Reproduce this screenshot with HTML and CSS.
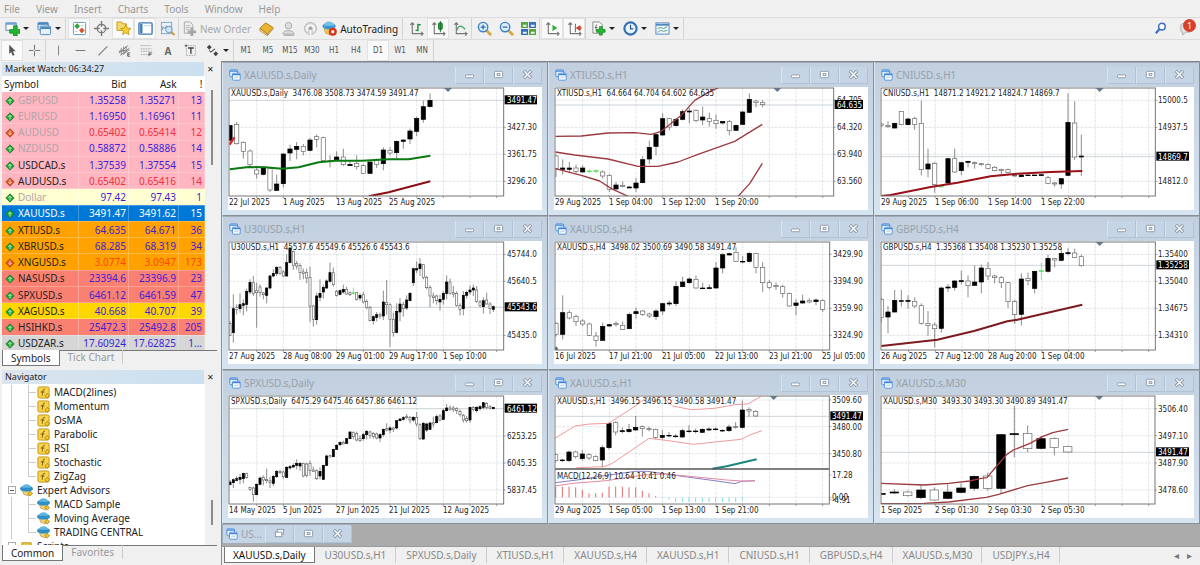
FILE: index.html
```html
<!DOCTYPE html>
<html lang="en">

<head>
    <meta charset="utf-8">
    <title>Trading terminal</title>
    <link rel="stylesheet" href="styles.css">
</head>

<body>
    <!-- icon set -->
    <svg class="defs" width="0" height="0">
        <symbol id="i-newchart" viewBox="0 0 16 16"><path d="M1 2h11v8H1z" fill="#fff" stroke="#4d86bd"/><path d="M1 3h11" stroke="#6ba0d0" stroke-width="2"/><path d="M9 5h4v4h3v4h-3v3H9v-3H5V9h4z" fill="#22b431" stroke="#0f7d1c" stroke-width=".7"/></symbol>
        <symbol id="i-profiles" viewBox="0 0 16 16"><rect x="1" y="1.500" width="11" height="8" rx="1" fill="#cfe2f5" stroke="#4d86bd"/><rect x="3.500" y="5.500" width="11" height="9" rx="1" fill="#e6f1fb" stroke="#4d86bd"/><path d="M1 3h11M4 7.500h10" stroke="#4d86bd" stroke-width="2"/></symbol>
        <symbol id="i-market" viewBox="0 0 16 16"><rect x="1.500" y="1.500" width="13" height="13" rx="1" fill="#fff" stroke="#5a94c8"/><path d="M5.500 2.500l3 3-3 3-3-3z" fill="#2da53a"/><path d="M10.500 7l3 3-3 3-3-3z" fill="#d4542c"/><path d="M9 5h4M3 11h3" stroke="#c4cdd6"/></symbol>
        <symbol id="i-target" viewBox="0 0 16 16"><circle cx="8" cy="8" r="4.500" fill="none" stroke="#777" stroke-width="1.300"/><path d="M8 0v6M8 10v6M0 8h6M10 8h6" stroke="#777" stroke-width="1.500"/></symbol>
        <symbol id="i-navigator" viewBox="0 0 16 16"><path d="M1 1h5l1 2h4v7H1z" fill="#f5d870" stroke="#c39a1c"/><path d="M10.500 4l1.600 3.600 3.900.4-2.900 2.600.9 3.900-3.500-2-3.500 2 .9-3.900L5 8l3.900-.4z" fill="#fbd22c" stroke="#b98a10" stroke-width=".8"/></symbol>
        <symbol id="i-terminal" viewBox="0 0 16 16"><rect x="1" y="2" width="14" height="12" rx="1" fill="#fff" stroke="#3f79b4" stroke-width="1.500"/><path d="M3.500 3v10" stroke="#3f79b4" stroke-width="2.500"/><path d="M6 5h8" stroke="#bad3ea"/></symbol>
        <symbol id="i-tester" viewBox="0 0 16 16"><rect x="1.500" y="1.500" width="11" height="12" fill="#edf3f9" stroke="#7da3c7"/><path d="M3 10V6l2 2 2-3 2 3 2-3" fill="none" stroke="#6f8fac"/><circle cx="9.500" cy="9" r="3.500" fill="#cfe4f7" stroke="#6394c2"/><path d="M12 11.500l3.500 3.500" stroke="#d09a35" stroke-width="2"/></symbol>
        <symbol id="i-order" viewBox="0 0 16 16"><path d="M2.500 1h6l3 3v9h-9z" fill="#eee" stroke="#aaa"/><path d="M4 5h5M4 7h5M4 9h4" stroke="#bbb"/><path d="M9 7h3v3h3v3h-3v3H9v-3H6v-3h3z" fill="#a5a5a5"/></symbol>
        <symbol id="i-book" viewBox="0 0 16 16"><path d="M1 8l6-6 8 5-6 7z" fill="#eab52e" stroke="#a8760e"/><path d="M1 8v2.500l8 5V14zM9 15.500l6-7V7" fill="#fbe9ae" stroke="#a8760e" stroke-width=".8"/></symbol>
        <symbol id="i-person" viewBox="0 0 16 16"><circle cx="8" cy="5" r="3.500" fill="#ddd" stroke="#aaa"/><path d="M2 14c0-5 12-5 12 0z" fill="#ddd" stroke="#aaa"/><path d="M3 15h11" stroke="#b8b8b8" stroke-width="2"/></symbol>
        <symbol id="i-signal" viewBox="0 0 16 16"><circle cx="8" cy="8" r="6.500" fill="#d4d4d4" stroke="#bbb"/><path d="M8 15V8M5 11a4 4 0 1 1 6 0" fill="none" stroke="#fff" stroke-width="1.500"/><circle cx="8" cy="8" r="1.500" fill="#999"/></symbol>
        <symbol id="i-auto" viewBox="0 0 16 16"><path d="M2 7l2 6 6 2 2-8z" fill="#f3cb53" stroke="#bd8c1f" stroke-width=".7"/><ellipse cx="7.500" cy="5.500" rx="7" ry="3.500" fill="#3d97cf"/><path d="M2 5c1-6 10-6 11 0z" fill="#74c0e8"/><circle cx="11.500" cy="11.500" r="4.300" fill="#d8331c"/><path d="M10 10h3v3h-3z" fill="#fff"/></symbol>
        <symbol id="i-bars" viewBox="0 0 16 16"><path d="M3.500 2v11.500H15M1.500 4l2-2 2 2M13 11.500l2 2-2 2" fill="none" stroke="#777" stroke-width="1.200"/><path d="M9.500 3v8M9.500 4h3M7 10h3" stroke="#21903a" stroke-width="1.500"/></symbol>
        <symbol id="i-candle" viewBox="0 0 16 16"><path d="M3.500 2v11.500H15M1.500 4l2-2 2 2M13 11.500l2 2-2 2" fill="none" stroke="#777" stroke-width="1.200"/><rect x="8" y="2" width="4" height="7" rx="1" fill="#21b13a" stroke="#12722a"/><path d="M10 0v12" stroke="#12722a"/></symbol>
        <symbol id="i-line" viewBox="0 0 16 16"><path d="M3.500 2v11.500H15M1.500 4l2-2 2 2M13 11.500l2 2-2 2" fill="none" stroke="#777" stroke-width="1.200"/><path d="M4 10c2-6 5-6 9-1" fill="none" stroke="#3aa35c" stroke-width="1.300"/></symbol>
        <symbol id="i-zoomin" viewBox="0 0 16 16"><path d="M10 10l5 5" stroke="#d8a73b" stroke-width="3"/><circle cx="6.500" cy="6.500" r="5" fill="#dceefb" stroke="#3c81c0" stroke-width="1.500"/><path d="M4 6.500h5M6.500 4v5" stroke="#2566a8" stroke-width="1.300"/></symbol>
        <symbol id="i-zoomout" viewBox="0 0 16 16"><path d="M10 10l5 5" stroke="#d8a73b" stroke-width="3"/><circle cx="6.500" cy="6.500" r="5" fill="#dceefb" stroke="#3c81c0" stroke-width="1.500"/><path d="M4 6.500h5" stroke="#2566a8" stroke-width="1.300"/></symbol>
        <symbol id="i-tile" viewBox="0 0 16 16"><path d="M0 1h7.500v6.500H0zM8.500 8.500H16V15H8.500z" fill="#58a53b"/><path d="M8.500 1H16v6.500H8.500zM0 8.500h7.500V15H0z" fill="#3a6fba"/><path d="M2 4h4v2H2zM10.500 4h4v2h-4zM2 11.500h4v2H2zM10.500 11.500h4v2h-4z" fill="#eaf3fb"/></symbol>
        <symbol id="i-scroll" viewBox="0 0 16 16"><path d="M3.500 2v11.500H15M1.500 4l2-2 2 2M13 11.500l2 2-2 2" fill="none" stroke="#777" stroke-width="1.200"/><path d="M8 4l5 3.500L8 11z" fill="#35ad3b"/></symbol>
        <symbol id="i-shift" viewBox="0 0 16 16"><path d="M3.500 2v11.500H15M1.500 4l2-2 2 2M13 11.500l2 2-2 2M9 3v9" fill="none" stroke="#777" stroke-width="1.200"/><path d="M14 5v5l-4-2.500zM13 7.500h3" fill="#c9402c" stroke="#c9402c"/></symbol>
        <symbol id="i-indicator" viewBox="0 0 16 16"><path d="M2 1h7l3 3v9H2z" fill="#f8f8f8" stroke="#888"/><path d="M6.500 4c-2 0-1 2-1 7M4 7h3" fill="none" stroke="#666"/><path d="M9 6h3v3h3v3h-3v3H9v-3H6V9h3z" fill="#25ba34" stroke="#13811f" stroke-width=".8"/></symbol>
        <symbol id="i-clock" viewBox="0 0 16 16"><circle cx="8" cy="8" r="6.500" fill="#eaf4fc" stroke="#2f6fb2" stroke-width="2.300"/><path d="M8 4v4.500h3" fill="none" stroke="#2c5583" stroke-width="1.300"/></symbol>
        <symbol id="i-template" viewBox="0 0 16 16"><rect x="1" y="2" width="14" height="12" fill="#eef5fb" stroke="#4f88bf"/><path d="M1 4h14" stroke="#4f88bf" stroke-width="2"/><path d="M3 8l3-1 3 1 4-2M3 12l3-2 3 1 4-1" fill="none" stroke="#5e9c86"/></symbol>
        <symbol id="i-pointer" viewBox="0 0 16 16"><path d="M4 1l8 8H8.500l2 4.500-2.200 1-1.800-4.500L4 12z" fill="#555"/></symbol>
        <symbol id="i-cross" viewBox="0 0 16 16"><path d="M8 1v6M8 9v6M1 8h6M9 8h6" stroke="#777" stroke-width="1.300"/></symbol>
        <symbol id="i-vline" viewBox="0 0 16 16"><path d="M8 2v12" stroke="#888" stroke-width="1.300"/></symbol>
        <symbol id="i-hline" viewBox="0 0 16 16"><path d="M2 8h12" stroke="#777" stroke-width="1.300"/></symbol>
        <symbol id="i-trend" viewBox="0 0 16 16"><path d="M3 14L14 3" stroke="#777" stroke-width="1.300"/></symbol>
        <symbol id="i-channel" viewBox="0 0 16 16"><path d="M1 11l11-9M3 14l11-9M4 5v8M7 3v8M10 3v6M1 9l8-1M6 13l8-6" stroke="#777" stroke-width="1.100"/><path d="M15 11h-3v4h3M12 13h2" fill="none" stroke="#444"/></symbol>
        <symbol id="i-fibo" viewBox="0 0 16 16"><path d="M1 2h13M1 6h13M1 9h13M1 13h8" stroke="#999" stroke-dasharray="2 1"/><path d="M11 15v-4h4M11 13h3" fill="none" stroke="#444"/></symbol>
        <symbol id="i-label" viewBox="0 0 16 16"><path d="M3 2h11v12H3z" fill="none" stroke="#888" stroke-dasharray="1 1"/><path d="M5 5h7M8.500 5v7" stroke="#444" stroke-width="1.700"/><path d="M1 1h3v2H1z" fill="#555"/></symbol>
        <symbol id="i-arrows" viewBox="0 0 16 16"><path d="M1 4l3-3 3 3-3 3zM9 12l3-3 3 3-3 3z" fill="#444"/><path d="M4 8l2 2 5-4" fill="none" stroke="#444" stroke-width="1.300"/></symbol>
        <symbol id="i-search" viewBox="0 0 16 16"><circle cx="9.500" cy="6" r="3.500" fill="#fff" stroke="#3a6ec4" stroke-width="1.600"/><path d="M7 8.500L3 13" stroke="#3a6ec4" stroke-width="2.300"/></symbol>
        <symbol id="i-chat" viewBox="0 0 16 16"><path d="M2 4c0-2 12-2 12 1v5c0 2-6 2-7 2l-3 3v-3c-2 0-2-1-2-2z" fill="#e2e2e2" stroke="#aaa"/></symbol>
        <symbol id="i-up" viewBox="0 0 12 12"><path d="M6 1l5 5-5 5-5-5z" fill="#22a637" stroke="#147a25"/><path d="M6 9V4M4 6l2-2 2 2" fill="none" stroke="#d5f5d8"/></symbol>
        <symbol id="i-down" viewBox="0 0 12 12"><path d="M6 1l5 5-5 5-5-5z" fill="#dd5722" stroke="#a53c12"/><path d="M6 3v5M4 6l2 2 2-2" fill="none" stroke="#ffe1d2"/></symbol>
        <symbol id="i-func" viewBox="0 0 14 14"><rect x="1" y="1" width="12" height="12" rx="1.500" fill="#f8d34b" stroke="#c19212"/><path d="M8.500 3.500c-3 0-2 3-3 7M4 6.500h4" fill="none" stroke="#6d5310"/><path d="M11 8l2.500 2.500L11 13l-2.500-2.500z" fill="#f6c722" stroke="#8d6a09" stroke-width=".7"/></symbol>
        <symbol id="i-expert" viewBox="0 0 14 14"><path d="M2 6l2 5 5 2 3-6z" fill="#efd27c" stroke="#a98632" stroke-width=".6"/><ellipse cx="7" cy="5" rx="7" ry="3.200" fill="#2f8fc4"/><path d="M2 4c1-5 9-5 10 0z" fill="#61b6e2"/><path d="M11 8l2.500 2.500L11 13l-2.500-2.500z" fill="#f6c722" stroke="#8d6a09" stroke-width=".7"/></symbol>
        <symbol id="i-script" viewBox="0 0 14 14"><path d="M2 3h10v10H2z" fill="#e8c94a" stroke="#b89316"/></symbol>
        <symbol id="i-win" viewBox="0 0 14 14"><rect x="1" y="1" width="9" height="8" rx="1" fill="#eaf3fc" stroke="#3f86d8"/><rect x="4" y="5" width="9" height="8" rx="1" fill="#fff" stroke="#3f86d8"/><path d="M1 2.500h9M4 6.500h9" stroke="#3f86d8" stroke-width="1.500"/><path d="M6 11l2-2 1 1 2-1" fill="none" stroke="#86b2e4"/></symbol>
        <symbol id="i-min" viewBox="0 0 12 12"><rect x="1.500" y="6.500" width="9" height="3" rx="1" fill="#fff" stroke="#8795a8"/></symbol>
        <symbol id="i-max" viewBox="0 0 12 12"><rect x="1.500" y="2.500" width="9" height="7" rx="1" fill="#fff" stroke="#8795a8"/><rect x="4.500" y="5" width="3" height="2" fill="#fff" stroke="#8795a8"/></symbol>
        <symbol id="i-restore" viewBox="0 0 12 12"><rect x="3.500" y="1.500" width="7" height="5" fill="#fff" stroke="#8795a8"/><rect x="1.500" y="4.500" width="7" height="5" fill="#fff" stroke="#8795a8"/></symbol>
        <symbol id="i-close" viewBox="0 0 12 12"><path d="M2 2l8 8M10 2l-8 8" stroke="#8795a8" stroke-width="3.600"/><path d="M2.500 2.500l7 7M9.500 2.500l-7 7" stroke="#fff" stroke-width="1.600"/></symbol>
    </svg>

    <nav class="menu">
        <button>File</button>
        <button>View</button>
        <button>Insert</button>
        <button>Charts</button>
        <button>Tools</button>
        <button>Window</button>
        <button>Help</button>
    </nav>

    <div class="toolbar">
        <div class="group">
            <button class="tool" aria-label="New chart"><svg><use href="#i-newchart"/></svg></button>
            <button class="more" aria-label="New chart list"></button>
            <button class="tool" aria-label="Profiles"><svg><use href="#i-profiles"/></svg></button>
            <button class="more" aria-label="Profiles list"></button>
        </div>
        <div class="group">
            <button class="tool on" aria-label="Market Watch"><svg><use href="#i-market"/></svg></button>
            <button class="tool" aria-label="Data window"><svg><use href="#i-target"/></svg></button>
            <button class="tool on" aria-label="Navigator"><svg><use href="#i-navigator"/></svg></button>
            <button class="tool on" aria-label="Terminal"><svg><use href="#i-terminal"/></svg></button>
            <button class="tool" aria-label="Strategy tester"><svg><use href="#i-tester"/></svg></button>
        </div>
        <div class="group">
            <button class="tool wide off"><svg><use href="#i-order"/></svg>New Order</button>
            <button class="tool" aria-label="MetaEditor"><svg><use href="#i-book"/></svg></button>
            <button class="tool" aria-label="Community"><svg><use href="#i-person"/></svg></button>
            <button class="tool" aria-label="Signals"><svg><use href="#i-signal"/></svg></button>
            <button class="tool wide"><svg><use href="#i-auto"/></svg>AutoTrading</button>
        </div>
        <div class="group">
            <button class="tool" aria-label="Bar chart"><svg><use href="#i-bars"/></svg></button>
            <button class="tool on" aria-label="Candlesticks"><svg><use href="#i-candle"/></svg></button>
            <button class="tool" aria-label="Line chart"><svg><use href="#i-line"/></svg></button>
        </div>
        <div class="group tight">
            <button class="tool" aria-label="Zoom in"><svg><use href="#i-zoomin"/></svg></button>
            <button class="tool" aria-label="Zoom out"><svg><use href="#i-zoomout"/></svg></button>
            <button class="tool" aria-label="Tile windows"><svg><use href="#i-tile"/></svg></button>
        </div>
        <div class="group tight">
            <button class="tool on" aria-label="Auto scroll"><svg><use href="#i-scroll"/></svg></button>
            <button class="tool on" aria-label="Chart shift"><svg><use href="#i-shift"/></svg></button>
        </div>
        <div class="group tight">
            <button class="tool" aria-label="Indicators"><svg><use href="#i-indicator"/></svg></button>
            <button class="more" aria-label="Indicators list"></button>
            <button class="tool" aria-label="Periods"><svg><use href="#i-clock"/></svg></button>
            <button class="more" aria-label="Periods list"></button>
            <button class="tool" aria-label="Templates"><svg><use href="#i-template"/></svg></button>
            <button class="more" aria-label="Templates list"></button>
        </div>
        <div class="right-tools">
            <button class="tool" aria-label="Search"><svg><use href="#i-search"/></svg></button>
            <button class="tool chat" aria-label="Messages"><svg><use href="#i-chat"/></svg><span class="badge">1</span></button>
        </div>
    </div>

    <div class="toolbar draw">
        <div class="group">
            <button class="tool on" aria-label="Cursor"><svg><use href="#i-pointer"/></svg></button>
            <button class="tool" aria-label="Crosshair"><svg><use href="#i-cross"/></svg></button>
        </div>
        <div class="group tight">
            <button class="tool" aria-label="Vertical line"><svg><use href="#i-vline"/></svg></button>
            <button class="tool" aria-label="Horizontal line"><svg><use href="#i-hline"/></svg></button>
            <button class="tool" aria-label="Trendline"><svg><use href="#i-trend"/></svg></button>
            <button class="tool" aria-label="Channel"><svg><use href="#i-channel"/></svg></button>
            <button class="tool" aria-label="Fibonacci"><svg><use href="#i-fibo"/></svg></button>
            <button class="tool letter">A</button>
            <button class="tool" aria-label="Text label"><svg><use href="#i-label"/></svg></button>
            <button class="tool" aria-label="Arrows"><svg><use href="#i-arrows"/></svg></button>
            <button class="more" aria-label="Arrows list"></button>
        </div>
        <div class="group tight periods">
            <button class="tool">M1</button>
            <button class="tool">M5</button>
            <button class="tool">M15</button>
            <button class="tool">M30</button>
            <button class="tool">H1</button>
            <button class="tool">H4</button>
            <button class="tool on">D1</button>
            <button class="tool">W1</button>
            <button class="tool">MN</button>
        </div>
    </div>

    <div class="main">
        <aside class="side">
            <section class="panel market">
                <header class="panel-title">Market Watch: 06:34:27<button aria-label="Close Market Watch">✕</button></header>
                <div class="panel-body">
                    <div class="scroll-view">
                        <table class="quotes">
                            <thead>
                                <tr><th>Symbol</th><th>Bid</th><th>Ask</th><th>!</th></tr>
                            </thead>
                            <tbody id="quotes"></tbody>
                        </table>
                    </div>
                    <div class="scrollbar"><span class="thumb"></span></div>
                </div>
                <div class="panel-tabs">
                    <button class="active">Symbols</button>
                    <button>Tick Chart</button>
                </div>
            </section>

            <section class="panel navigator">
                <header class="panel-title">Navigator<button aria-label="Close Navigator">✕</button></header>
                <div class="panel-body">
                    <ul class="tree scroll-view">
                        <li class="leaf"><svg><use href="#i-func"/></svg>MACD(2lines)</li>
                        <li class="leaf"><svg><use href="#i-func"/></svg>Momentum</li>
                        <li class="leaf"><svg><use href="#i-func"/></svg>OsMA</li>
                        <li class="leaf"><svg><use href="#i-func"/></svg>Parabolic</li>
                        <li class="leaf"><svg><use href="#i-func"/></svg>RSI</li>
                        <li class="leaf"><svg><use href="#i-func"/></svg>Stochastic</li>
                        <li class="leaf last"><svg><use href="#i-func"/></svg>ZigZag</li>
                        <li class="branch"><button aria-label="Collapse"></button><svg><use href="#i-expert"/></svg>Expert Advisors</li>
                        <li class="leaf"><svg><use href="#i-expert"/></svg>MACD Sample</li>
                        <li class="leaf"><svg><use href="#i-expert"/></svg>Moving Average</li>
                        <li class="leaf last"><svg><use href="#i-expert"/></svg>TRADING CENTRAL</li>
                        <li class="branch"><button aria-label="Collapse"></button><svg><use href="#i-script"/></svg>Scripts</li>
                    </ul>
                    <div class="scrollbar"><span class="thumb"></span></div>
                </div>
                <div class="panel-tabs">
                    <button class="active">Common</button>
                    <button>Favorites</button>
                </div>
            </section>
        </aside>

        <div class="work">
            <div class="desk">
                <div class="windows" id="windows"></div>
                <div class="minimized">
                    <svg class="win-icon"><use href="#i-win"/></svg>
                    <span>US...</span>
                    <div class="win-buttons">
                        <button aria-label="Restore"><svg><use href="#i-restore"/></svg></button>
                        <button aria-label="Maximize"><svg><use href="#i-max"/></svg></button>
                        <button aria-label="Close"><svg><use href="#i-close"/></svg></button>
                    </div>
                </div>
            </div>
            <div class="chart-tabs">
                <button class="active">XAUUSD.s,Daily</button>
                <button>U30USD.s,H1</button>
                <button>SPXUSD.s,Daily</button>
                <button>XTIUSD.s,H1</button>
                <button>XAUUSD.s,H4</button>
                <button>XAUUSD.s,H1</button>
                <button>CNIUSD.s,H1</button>
                <button>GBPUSD.s,H4</button>
                <button>XAUUSD.s,M30</button>
                <button>USDJPY.s,H4</button>
                <div class="tab-scroll">
                    <button aria-label="Scroll left">◂</button>
                    <button aria-label="Scroll right">▸</button>
                </div>
            </div>
        </div>
    </div>

    <script src="charts.js"></script>
</body>

</html>
```
FILE: styles.css
```css
* {
    box-sizing: border-box;
}

body {
    margin: 0;
    height: 100vh;
    display: flex;
    flex-direction: column;
    overflow: hidden;
    background-color: #f0f0f0;
    color: #222;
    font-family: "Noto Sans", "Open Sans", sans-serif;
    font-size: 10px;
    line-height: 14px;
}

button {
    border: 0;
    margin: 0;
    padding: 0;
    background: none;
    color: inherit;
    font: inherit;
}

ul {
    margin: 0;
    padding: 0;
    list-style: none;
}

.defs {
    position: absolute;
}

/* menu */
.menu {
    display: flex;
    gap: 16px;
    height: 18px;
    padding: 0 4px;
    color: #999;
    border-bottom: 1px solid #dcdcdc;
}

/* toolbars */
.toolbar {
    display: flex;
    height: 22px;
    border-bottom: 1px solid #dcdcdc;
}

.toolbar.draw {
    height: 21px;
    border-bottom: 0;
}

.group {
    display: flex;
    padding-left: 1px;
    border-right: 1px solid #d4d4d4;
    margin-right: 1px;
}

.group.tight {
    padding: 0;
}

.tool {
    display: flex;
    align-items: center;
    justify-content: center;
    width: 22px;
    flex: none;
}

.tool svg {
    width: 15px;
    height: 15px;
}

.draw .tool svg {
    width: 13px;
    height: 13px;
}

.tool.on {
    background-color: #fafafa;
    border: 1px solid #e2e2e2;
}

.tool.wide {
    width: auto;
    gap: 3px;
    padding: 0 4px 0 1px;
    color: #222;
}

.tool.wide.off {
    color: #aaa;
}

.tool.letter {
    font-size: 10px;
    font-weight: bold;
    color: #666;
}

.more {
    width: 10px;
    display: flex;
    align-items: center;
}

.more::before {
    content: "";
    border: 3px solid transparent;
    border-top-color: #222;
    border-bottom: 0;
}

.periods {
    font-family: "DejaVu Sans Condensed", "DejaVu Sans", sans-serif;
    font-size: 8px;
    color: #555;
}

.right-tools {
    display: flex;
    gap: 4px;
    margin-left: auto;
    padding-right: 3px;
}

.chat {
    position: relative;
}

.badge {
    position: absolute;
    top: 1px;
    right: 1px;
    width: 13px;
    height: 13px;
    border-radius: 50%;
    background-color: #d9402b;
    color: #fff;
    font-size: 9px;
    line-height: 13px;
    text-align: center;
}

.main {
    flex: 1;
    min-height: 0;
    display: flex;
}

/* left side */
.side {
    width: 222px;
    flex: none;
    display: flex;
    flex-direction: column;
    padding: 1px 4px 4px 2px;
    border-right: 1px solid #8c8f94;
}

.panel {
    display: flex;
    flex-direction: column;
}

.market {
    flex: 1;
    min-height: 0;
    padding-bottom: 4px;
}

.navigator {
    height: 191px;
}

.panel-title {
    display: flex;
    justify-content: space-between;
    height: 14px;
    padding: 0 3px;
    font-size: 9px;
    background-image: linear-gradient(90deg, #dbe5ee, #c9dff0);
}

.panel-title button {
    background-color: #f0f0f0;
    margin-right: -3px;
    padding: 0 3px;
    font-size: 8px;
}

.panel-body {
    flex: 1;
    min-height: 0;
    display: flex;
    border-bottom: 1px solid #777;
}

.scroll-view {
    flex: 1;
    overflow: hidden;
    background-color: #fff;
}

.scrollbar {
    width: 12px;
    padding-left: 6px;
}

.thumb {
    display: block;
    width: 2px;
    height: 75px;
    margin-top: 14px;
    background-color: #8b8b8b;
}

.navigator .thumb {
    height: 25px;
    margin-top: 116px;
}

.panel-tabs {
    display: flex;
    height: 16px;
    margin-top: -1px;
    font-size: 10px;
    color: #999;
}

.panel-tabs button {
    padding: 0 8px;
    border-right: 1px solid #ccc;
    margin-bottom: 2px;
}

.panel-tabs .active {
    color: #222;
    background-color: #fff;
    border: 1px solid #777;
    border-top: 0;
    margin-bottom: 0;
}

/* quotes */
.quotes {
    width: 100%;
    height: 276px;
    table-layout: fixed;
    border-collapse: collapse;
    line-height: 14px;
}

.quotes th,
.quotes td {
    padding: 0 2px;
    text-align: right;
    font-weight: normal;
    white-space: nowrap;
}

.quotes th {
    height: 16px;
}

.quotes td {
    color: #3c1fd6;
    border-right: 1px solid #ffffff40;
    border-bottom: 1px solid #ffffff40;
}

.quotes th:nth-child(2),
.quotes th:nth-child(3) {
    width: 50px;
}

.quotes th:last-child {
    width: 26px;
}

.quotes th:first-child,
.quotes td:first-child {
    text-align: left;
    color: #222;
}

.quotes svg {
    width: 10px;
    height: 10px;
    margin: 0 3px 0 1px;
    vertical-align: -2px;
}

.quotes .pink { background-color: #ffb6c1; }
.quotes .cream { background-color: #ffffd2; }
.quotes .orange { background-color: #ffa200; }
.quotes .salmon { background-color: #fa8072; }
.quotes .gold { background-color: #ffd700; }
.quotes .silver { background-color: #d6d6d6; }
.quotes .selected { background-color: #0078d7; }
.quotes .dim td:first-child { color: #b3a5ab; }
.quotes .fall td { color: #f0323c; }
.quotes .orange.fall td { color: #ff4800; }
.quotes .fall td:first-child { color: #222; }
.quotes .dim.fall td:first-child { color: #b3a5ab; }
.quotes .selected td,
.quotes .selected td:first-child { color: #fff; }

/* navigator tree */
.tree {
    padding-top: 1px;
}

.tree li {
    display: flex;
    align-items: center;
    gap: 4px;
    height: 14px;
    white-space: nowrap;
}

.tree li svg {
    width: 13px;
    height: 13px;
    flex: none;
}

.tree .leaf {
    padding-left: 35px;
    background-image: linear-gradient(#ccc, #ccc), linear-gradient(#ccc, #ccc), linear-gradient(#ccc, #ccc);
    background-repeat: no-repeat;
    background-position: 9px 0, 26px 0, 26px 7px;
    background-size: 1px 100%, 1px 100%, 8px 1px;
}

.tree .leaf.last {
    background-size: 1px 100%, 1px 8px, 8px 1px;
}

.tree .branch {
    padding-left: 6px;
}

.tree .branch button {
    width: 8px;
    height: 8px;
    border: 1px solid #aaa;
    background: linear-gradient(#555, #555) center / 4px 1px no-repeat;
}

/* work area */
.work {
    flex: 1;
    min-width: 0;
    display: flex;
    flex-direction: column;
}

.desk {
    flex: 1;
    min-height: 0;
    overflow: hidden;
    background-color: #ababab;
    border-top: 1px solid #80858c;
}

.windows {
    display: grid;
    grid-template-columns: repeat(3, 1fr);
}

.window {
    padding: 0 5px 5px;
    background-image: linear-gradient(#c1cfdf, #d6e3f1);
    border: 1px solid #858e99;
    border-top-color: #a3adb8;
    border-left-color: #dbe6f1;
}

.win-title {
    display: flex;
    align-items: center;
    gap: 3px;
    height: 24px;
    padding-left: 1px;
    color: #97a0ab;
    font-size: 10px;
}

.win-icon {
    width: 12px;
    height: 12px;
    flex: none;
}

.win-buttons {
    display: flex;
    margin-left: auto;
}

.win-buttons button {
    width: 29px;
    height: 17px;
    display: flex;
    align-items: center;
    justify-content: center;
    border: 1px solid #b2c2d4;
    border-top: 0;
    border-left-color: #d8e3ee;
    background-color: #c6d5e6;
}

.win-buttons svg {
    width: 11px;
    height: 11px;
}

.chart {
    display: block;
    width: 100%;
    background-color: #fff;
}

.chart text {
    font-family: "DejaVu Sans Condensed", "DejaVu Sans", sans-serif;
    font-size: 8px;
    fill: #222;
}

.chart .now-text {
    fill: #fff;
}

.minimized {
    display: flex;
    align-items: center;
    gap: 3px;
    width: 130px;
    height: 20px;
    padding: 0 1px 0 3px;
    color: #97a0ab;
    background-color: #c6d5e6;
    border: 1px solid #a3adb8;
}

/* chart tabs */
.chart-tabs {
    display: flex;
    height: 19px;
    padding: 0 2px 2px;
    color: #888;
    white-space: nowrap;
    border-top: 1px solid #9a9a9a;
}

.chart-tabs > button {
    padding: 0 9px 0 10px;
    border-right: 1px solid #ccc;
}

.chart-tabs > .active {
    padding: 0 8px;
    color: #111;
    background-color: #fff;
    border: 1px solid #777;
    border-top: 0;
}

.tab-scroll {
    display: flex;
    gap: 8px;
    margin-left: auto;
    padding-right: 6px;
    color: #777;
}
```
FILE: charts.js
```js
// quotes: symbol, bid, ask, spread, row classes
var quotes = [
    ['GBPUSD', '1.35258', '1.35271', '13', 'pink dim'],
    ['EURUSD', '1.16950', '1.16961', '11', 'pink dim'],
    ['AUDUSD', '0.65402', '0.65414', '12', 'pink dim fall'],
    ['NZDUSD', '0.58872', '0.58886', '14', 'pink dim'],
    ['USDCAD.s', '1.37539', '1.37554', '15', 'pink'],
    ['AUDUSD.s', '0.65402', '0.65416', '14', 'pink fall'],
    ['Dollar', '97.42', '97.43', '1', 'cream dim'],
    ['XAUUSD.s', '3491.47', '3491.62', '15', 'selected'],
    ['XTIUSD.s', '64.635', '64.671', '36', 'orange'],
    ['XBRUSD.s', '68.285', '68.319', '34', 'orange'],
    ['XNGUSD.s', '3.0774', '3.0947', '173', 'orange fall'],
    ['NASUSD.s', '23394.6', '23396.9', '23', 'salmon'],
    ['SPXUSD.s', '6461.12', '6461.59', '47', 'salmon'],
    ['XAGUSD.s', '40.668', '40.707', '39', 'gold'],
    ['HSIHKD.s', '25472.3', '25492.8', '205', 'salmon'],
    ['USDZAR.s', '17.60924', '17.62825', '1...', 'silver']
];

document.getElementById('quotes').innerHTML = quotes.map(function (q) {
    var icon = q[4].indexOf('fall') >= 0 ? 'down' : 'up';
    return '<tr class="' + q[4] + '"><td><svg><use href="#i-' + icon + '"/></svg>' + q[0] + '</td><td>' +
        q[1] + '</td><td>' + q[2] + '</td><td>' + q[3] + '</td></tr>';
}).join('');

// drawing units per pixel
var px = 3;

// x0, step: first candle and distance between candles
// candles: colour (b, w, g) and high, top, bottom, low
var charts = [
    {
        title: 'XAUUSD.s,Daily', info: '3476.08 3508.73 3474.59 3491.47', x0: 24, step: 20, right: 845, mark: 678,
        now: [115, '3491.47'], prices: [[196, '3427.30'], [277, '3361.75'], [358, '3296.20']],
        times: [[22, '22 Jul 2025'], [182, '1 Aug 2025'], [343, '13 Aug 2025'], [502, '25 Aug 2025']],
        lines: [['#0b7a12', 6, '23,322 80,315 130,316 180,320 230,316 290,301 340,296 420,296 500,292 560,292 625,281'], ['#8b0d16', 6, '440,403 500,391 625,358'], ['#d22', 7, '23,248 37,226']],
        candles: 'b190,190,235,235 w180,187,245,248 w238,241,268,290 w262,267,308,318 w315,324,336,350 b314,318,337,340 w316,320,384,390 b338,366,385,387 b274,276,365,376 b248,261,273,297 b240,253,262,292 w246,253,268,280 b228,234,265,268 w218,224,232,256 w224,227,296,298 b280,297,299,316 b268,285,293,296 w260,285,308,312 b296,307,311,312 w280,304,314,322 w306,311,334,336 b300,300,334,336 w290,292,307,318 b256,264,305,325 w256,265,273,280 b236,238,272,292 b232,234,238,260 b200,207,231,246 b164,169,208,222 b116,134,172,182 b94,115,134,136'
    },
    {
        title: 'XTIUSD.s,H1', info: '64.664 64.704 64.602 64.635', x0: 24, step: 20, right: 857, mark: 688,
        now: [129, '64.635'], prices: [[114, '64.705'], [196, '64.320'], [277, '63.940'], [358, '63.560']],
        times: [[22, '29 Aug 2025'], [182, '1 Sep 04:00'], [343, '1 Sep 12:00'], [502, '1 Sep 20:00']],
        lines: [['#9c3a40', 4, '22,223 100,222 180,213 260,212 310,217 340,208 400,160 440,115 480,92 515,75'], ['#9c3a40', 4, '22,270 80,279 180,291 270,313 330,313 390,300 450,277 560,238 643,187'], ['#9c3a40', 4, '22,320 100,340 155,357 190,380 240,403'], ['#9c3a40', 4, '570,403 605,365 643,304']],
        candles: 'w278,282,320,345 b292,318,322,338 b300,318,322,334 w308,318,328,334 b310,318,330,331 g322,327,329,334 g322,326,328,334 w325,330,342,350 w336,340,382,390 b360,369,381,383 w358,370,373,376 b372,375,378,378 b348,363,378,390 b282,293,362,364 b236,256,291,306 b216,218,253,280 b154,170,219,222 w168,170,195,205 b168,172,191,194 b142,149,172,175 b138,147,150,184 w142,146,176,180 b134,165,174,190 w152,170,178,194 w158,175,185,200 b177,178,183,188 w174,178,206,220 b188,190,205,206 b146,150,187,190 b94,112,151,153 w114,117,122,136 w114,122,128,136'
    },
    {
        title: 'CNIUSD.s,H1', info: '14871.2 14921.2 14824.7 14869.7', x0: 22, step: 20, right: 844, mark: 677,
        now: [284, '14869.7'], prices: [[115, '15000.5'], [196, '14937.5'], [358, '14812.0']], grid: [277],
        times: [[22, '29 Aug 2025'], [182, '1 Sep 06:00'], [342, '1 Sep 14:00'], [502, '1 Sep 22:00']],
        lines: [['#9a1218', 6, '22,402 50,399 170,375 250,362 350,343 430,335 530,330 625,327']],
        candles: 'w183,186,190,195 w178,190,194,198 b182,184,198,200 w148,148,188,190 b168,171,188,190 w164,170,187,204 w116,184,323,340 b260,306,321,346 w300,304,368,392 g374,374,374,374 b288,290,363,364 w260,290,330,332 b300,302,326,340 b296,298,301,316 w298,302,305,320 w303,305,308,312 w304,307,319,321 w312,316,326,328 w320,322,326,338 w320,323,332,335 w338,340,342,344 b338,339,344,345 b338,339,341,342 b338,339,341,342 b337,338,341,342 w342,347,364,366 w360,363,366,374 b348,350,366,380 b94,181,340,342 w118,183,285,294 b218,282,285,342'
    },
    {
        title: 'U30USD.s,H1', info: '45537.6 45549.6 45526.6 45543.6', x0: 24, step: 10, right: 845,
        now: [274, '45543.6'], prices: [[115, '45744.0'], [196, '45640.5'], [358, '45435.0']],
        times: [[22, '27 Aug 2025'], [182, '28 Aug 08:00'], [343, '29 Aug 01:00'], [502, '29 Aug 17:00'], [663, '1 Sep 10:00']],
        lines: [],
        candles: 'w315,322,358,360 b235,278,350,380 w265,275,280,295 b232,266,278,290 b250,263,268,298 b218,226,265,286 b190,199,228,235 w180,200,232,240 w200,224,230,335 w205,213,230,242 w228,231,236,250 b214,216,238,262 b176,180,216,220 b160,172,180,184 b150,154,172,180 w150,154,172,176 w162,168,180,183 b115,140,180,182 b94,96,140,142 w104,106,148,162 w135,142,150,160 w142,148,170,192 w158,168,172,190 w158,170,186,202 w152,184,270,318 w266,270,310,332 b230,240,311,326 b190,232,244,256 b206,214,228,248 b190,195,216,220 b140,170,196,200 w155,170,206,212 w222,226,238,242 b220,224,235,238 b206,220,228,232 w212,220,234,236 w226,230,236,240 g215,230,232,236 w228,230,250,254 b232,238,246,254 w228,236,258,262 w250,256,274,280 w270,274,314,316 b298,302,314,326 b288,296,304,316 w290,296,300,308 b224,258,300,312 w192,260,266,296 w262,266,310,392 w290,310,350,362 b262,286,349,352 b246,264,288,316 w258,266,278,302 b238,252,276,282 b228,232,254,256 b155,158,200,210 b136,158,162,172 b126,144,158,180 w144,146,184,190 w180,184,215,220 w208,214,240,274 w230,240,245,262 w236,240,254,266 b236,250,258,284 b226,232,250,266 b178,198,232,250 w188,198,232,236 w210,230,234,244 w226,232,268,272 w262,268,280,298 b225,238,278,298 b224,229,238,248 b208,222,228,236 b206,216,222,240 w210,222,256,260 w252,258,268,274 b244,254,272,292 w230,252,264,266 w258,264,278,294 b268,272,280,288'
    },
    {
        title: 'XAUUSD.s,H4', info: '3498.02 3500.69 3490.58 3491.47', x0: 24, step: 20, right: 845,
        prices: [[115, '3429.90'], [196, '3394.90'], [277, '3359.90'], [358, '3324.90']],
        times: [[22, '16 Jul 2025'], [182, '17 Jul 21:00'], [342, '21 Jul 05:00'], [502, '22 Jul 13:00'], [662, '23 Jul 21:00'], [822, '25 Jul 05:00']],
        lines: [['#555e6b', 9, '22,394 27,402']],
        candles: 'w318,323,355,362 b238,290,355,370 w283,290,306,310 w296,301,317,330 w310,315,324,330 w320,324,358,360 w348,360,373,392 b320,331,373,375 b324,326,330,332 w316,322,326,332 w316,328,340,342 b290,295,338,340 b275,287,293,308 w282,285,295,300 w290,294,300,306 b280,285,302,312 b260,263,285,296 b254,261,264,270 b196,211,263,270 b182,198,212,214 b184,189,200,204 w178,190,216,218 b200,216,218,220 b206,215,218,220 b138,156,216,218 b112,116,156,172 b110,113,117,118 w94,109,136,138 b120,136,138,142 b108,112,136,140 w110,112,154,172 w138,154,200,228 w192,200,214,220 w200,208,212,222 w206,212,232,245 w230,232,270,272 b250,261,268,298 b236,255,261,264 w246,254,258,262 b248,252,257,268 w250,254,280,288'
    },
    {
        title: 'GBPUSD.s,H4', info: '1.35368 1.35408 1.35230 1.35258', x0: 22, step: 20, right: 844, mark: 677,
        now: [148, '1.35258'], prices: [[115, '1.35400'], [196, '1.35040'], [277, '1.34675'], [358, '1.34310']],
        times: [[22, '26 Aug 2025'], [182, '27 Aug 12:00'], [342, '28 Aug 20:00'], [502, '1 Sep 04:00']],
        lines: [['#7d1a1f', 6, '22,390 190,371 300,345 400,316 430,311 625,266']],
        candles: 'w245,250,304,320 b270,288,303,352 b222,253,288,290 b222,254,256,272 b238,253,256,278 w244,256,270,276 w262,269,322,326 w285,322,328,360 w320,327,338,394 b212,216,337,350 b204,213,216,228 b192,195,214,224 b164,194,197,206 w178,195,209,244 b148,198,208,210 b146,156,198,232 w138,157,180,192 w176,180,185,202 w180,185,200,216 w198,200,257,276 w252,257,296,324 b172,189,295,328 w170,187,194,208 b164,166,217,232 g140,164,166,192 b116,127,166,170 w126,128,132,154 b96,112,133,136 b96,110,113,118 w98,111,124,126 w116,122,149,152'
    },
    {
        title: 'SPXUSD.s,Daily', info: '6475.29 6475.46 6457.86 6461.12', x0: 24, step: 10, right: 845,
        now: [116, '6461.12'], prices: [[198, '6253.25'], [279, '6045.35'], [360, '5837.45']],
        times: [[22, '14 May 2025'], [182, '5 Jun 2025'], [343, '27 Jun 2025'], [502, '21 Jul 2025'], [663, '12 Aug 2025']],
        lines: [],
        candles: 'b330,336,344,346 b325,329,338,354 b318,326,331,334 b312,322,328,342 b308,310,326,340 w308,311,322,326 w350,352,358,362 w350,354,374,395 b340,343,374,376 b320,324,343,346 w316,322,330,346 w296,328,332,340 w320,332,338,354 b315,319,340,348 b300,304,320,324 w300,304,308,312 w302,306,320,326 b288,292,322,324 b286,290,294,298 b280,286,291,294 b268,280,286,298 b276,280,288,302 w278,280,318,322 w278,282,316,322 w272,280,302,318 w290,300,304,306 w298,302,326,330 b292,304,318,328 b284,286,328,330 b254,258,286,288 w254,257,261,262 b236,238,260,262 b222,226,238,240 b215,217,224,228 w212,217,222,222 b204,206,220,222 b184,186,206,208 w184,188,200,208 w185,190,210,214 w196,205,212,216 b188,194,206,212 b180,184,194,208 w182,186,196,206 w186,190,200,206 w188,192,204,208 b190,194,204,216 b176,178,194,200 w160,176,180,184 b168,174,180,190 w170,174,178,186 b150,152,174,178 b144,147,152,154 b138,143,148,152 w132,140,143,148 w138,142,150,160 b138,142,150,156 w126,142,162,170 w160,164,206,210 b156,160,207,210 b158,162,180,186 b155,159,178,180 w140,158,162,172 b134,140,158,160 w132,138,150,154 b116,122,148,150 b102,114,122,124 w106,114,118,122 w108,114,118,126 w112,116,122,132 w118,124,134,140 w132,136,150,158 w138,145,152,158 b110,112,150,158 w108,112,118,124 b108,112,122,128 b106,110,116,122 b96,98,112,118 w96,100,112,118 w106,110,114,118 b110,112,116,118'
    },
    {
        title: 'XAUUSD.s,H1', info: '3496.15 3496.15 3490.58 3491.47', x0: 23, step: 20, right: 844, mark: 677,
        now: [139, '3491.47'], prices: [[90, '3509.60'], [170, '3480.00'], [251, '3450.80']],
        times: [[22, '29 Aug 2025'], [182, '1 Sep 05:00'], [343, '1 Sep 13:00'], [502, '1 Sep 21:00']],
        lines: [['#f09a9c', 3, '21,205 81,168 125,162 182,160 262,108 303,77 343,80 374,108 430,119 499,115 561,104 599,102 638,80'], ['#f09a9c', 3, '85,293 168,290 193,280 303,205 362,212 436,223 511,215 580,208 605,195 642,182'], ['#1b8580', 6, '493,296 536,289 626,268']],
        macd: {
            label: 'MACD(12,26,9) 10.64 10.41 0.46', top: 297, zero: 382,
            up: [350, 350, 350, 352, 360, 370, 370, 368, 350, 350, 350, 352, 352, 362, 370, 378],
            down: [385, 388, 396, 396, 396, 396, 396, 396, 396, 396, 396, 396, 390],
            prices: [[315, '17.28'], [382, '0.00'], [389, '-4.91']],
            lines: [['#8a7cc8', 3, '21,338 87,330 175,316 262,304 299,304 374,315 499,332 561,341 580,334 621,332'], ['#e58aa0', 3, '21,348 75,340 175,332 287,315 349,312 436,320 536,330 580,333 621,333']]
        },
        candles: 'w250,254,272,278 b266,270,272,276 b242,246,272,276 w242,246,260,266 b240,252,266,272 w250,254,264,270 w256,260,272,274 b226,233,270,292 b156,160,233,238 w154,158,186,196 b172,182,185,190 b162,178,185,188 b138,172,180,182 w166,170,176,200 w170,176,179,184 w176,178,202,208 b180,196,202,208 b186,196,198,202 b192,198,200,204 b176,182,201,204 b166,183,185,188 b176,183,185,190 b174,178,187,188 b172,177,180,184 b172,177,179,182 b178,181,183,186 b164,171,182,186 w156,170,172,176 b92,120,172,176 w112,118,123,140 w120,124,138,140'
    },
    {
        title: 'XAUUSD.s,M30', info: '3493.30 3493.30 3490.89 3491.47', x0: 21, step: 40, right: 843, mark: 676,
        now: [247, '3491.47'], prices: [[116, '3506.40'], [197, '3497.10'], [279, '3487.90'], [360, '3478.60']],
        times: [[21, '1 Sep 2025'], [182, '2 Sep 01:30'], [341, '2 Sep 03:30'], [501, '2 Sep 05:30']],
        lines: [['#9c3a40', 4, '21,340 150,345 224,340 287,333 318,326 339,323 368,288 399,253 418,240 468,220 505,200 536,188 582,178'], ['#9c3a40', 4, '21,401 150,400 224,396 337,382 374,373 461,347 511,338 582,324']],
        candles: 'b369,370,373,374 b358,366,369,372 w362,366,377,380 b345,360,383,388 w352,360,390,392 b342,366,385,388 b340,354,367,370 b316,319,355,362 w308,318,355,362 b192,194,355,372 b108,191,194,262 w166,190,236,246 b198,206,235,238 w202,206,232,256 w228,230,246,248'
    }
];

function line(x1, y1, x2, y2, color, extra) {
    return '<line x1="' + x1 + '" y1="' + y1 + '" x2="' + x2 + '" y2="' + y2 + '" stroke="' + color + '" ' + (extra || '') + '/>';
}

function text(x, y, str, cls) {
    return '<text x="' + Math.round(x) + '" y="' + Math.round(y) + '" class="' + (cls || '') + '">' + str + '</text>';
}

function polylines(list) {
    return list.map(function (l) {
        return '<polyline fill="none" stroke-linejoin="round" stroke="' + l[0] + '" stroke-width="' + l[1] + '" points="' + l[2] + '"/>';
    }).join('');
}

function drawCandles(c) {
    var colors = { b: '#000', w: '#666', g: '#5d5' };
    var w = Math.max(c.step * 0.64, 6);
    return c.candles.split(' ').map(function (s, i) {
        var v = s.slice(1).split(',').map(Number);
        var x = c.x0 + i * c.step;
        var color = colors[s[0]];
        var wick = s[0] == 'g' ? color : '#555';
        return line(x, v[0], x, v[3], wick, 'stroke-width="2"') +
            '<rect x="' + (x - w / 2) + '" y="' + v[1] + '" width="' + w + '" height="' + Math.max(v[2] - v[1], 1) +
            '" fill="' + (s[0] == 'w' ? '#fff' : color) + '" stroke="' + color + '" stroke-width="2"/>';
    }).join('');
}

function drawMacd(m, c) {
    var out = line(0, m.top, c.right, m.top, '#555', 'stroke-width="4"');
    out += line(0, m.zero, c.right, m.zero, '#ccd', 'stroke-dasharray="2 2" stroke-width="2"');
    m.up.forEach(function (y, i) {
        var x = c.x0 + i * c.step;
        out += line(x, m.zero, x, y, '#e46a6a', 'stroke-width="3"');
    });
    m.down.forEach(function (y, i) {
        var x = c.x0 + (i + m.up.length) * c.step;
        out += line(x, m.zero, x, y, '#7ee0e0', 'stroke-width="3"');
    });
    return out + polylines(m.lines);
}

function drawChart(c, n) {
    var bottom = 134 * px;
    var top = 26 * px;
    var left = 7 * px;
    var dash = 'stroke-dasharray="2 2" stroke-width="2"';
    var grid = '';
    var labels = '';
    var i;

    for (i = 0; i < 10; i++) {
        var gx = 104 + i * 80;
        grid += line(gx, top, gx, bottom, '#bcc5ce', dash);
        labels += line(gx / px, 134, gx / px, 136, '#777', 'stroke-width="0.7"');
    }
    var rows = c.prices.map(function (p) { return p[0]; }).concat(c.grid || []);
    rows.forEach(function (y) {
        grid += line(left, y, c.right, y, '#bcc5ce', dash);
    });
    if (c.now) {
        grid += line(left, c.now[0], c.right, c.now[0], '#b3bcc6', 'stroke-width="2"');
    }

    var right = c.right / px;
    var prices = c.prices.concat(c.macd ? c.macd.prices : []);
    prices.forEach(function (p) {
        labels += line(right, p[0] / px, right + 2, p[0] / px, '#777', 'stroke-width="0.7"');
        labels += text(right + 3, p[0] / px + 3, p[1]);
    });
    if (c.now) {
        labels += '<rect x="' + (right + 1) + '" y="' + (c.now[0] / px - 5) + '" width="' + (314 - right) + '" height="9" fill="#000"/>';
        labels += text(right + 3, c.now[0] / px + 3, c.now[1], 'now-text');
    }
    c.times.forEach(function (t) {
        labels += text(t[0] / px, 143, t[1]);
    });
    labels += text(9, 34, c.title + '&#160; ' + c.info);
    if (c.macd) {
        labels += text(9, 109, c.macd.label);
    }

    var mark = c.mark ? '<path d="M' + (c.mark / px - 4) + ' 26h8l-4 4z" fill="#66788c"/>' : '';

    return '<svg class="chart" viewBox="6 25 314 123" role="img" aria-label="' + c.title + '">' +
        '<clipPath id="clip' + n + '"><rect x="' + left + '" y="' + top + '" width="' + (c.right - left) + '" height="' + (bottom - top) + '"/></clipPath>' +
        '<g transform="scale(' + 1 / px + ')"><g clip-path="url(#clip' + n + ')">' + grid + drawCandles(c) + polylines(c.lines) +
        (c.macd ? drawMacd(c.macd, c) : '') + '</g></g>' +
        '<rect x="7" y="26" width="' + (right - 7) + '" height="108" fill="none" stroke="#777" stroke-width="1"/>' +
        mark + labels + '</svg>';
}

document.getElementById('windows').innerHTML = charts.map(function (c, n) {
    return '<section class="window"><header class="win-title"><svg class="win-icon"><use href="#i-win"/></svg><span>' + c.title + '</span>' +
        '<div class="win-buttons">' +
        '<button aria-label="Minimize"><svg><use href="#i-min"/></svg></button>' +
        '<button aria-label="Maximize"><svg><use href="#i-max"/></svg></button>' +
        '<button aria-label="Close"><svg><use href="#i-close"/></svg></button>' +
        '</div></header>' + drawChart(c, n) + '</section>';
}).join('');
```
